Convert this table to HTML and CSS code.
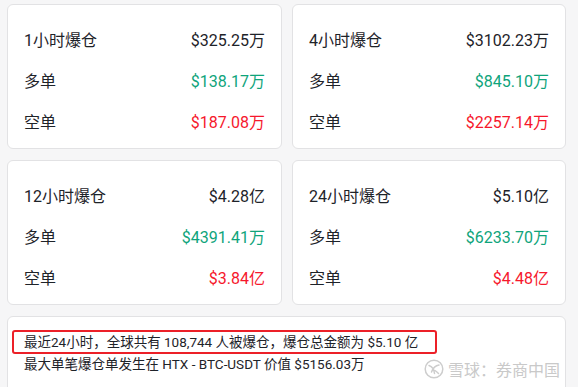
FILE: index.html
```html
<!DOCTYPE html>
<html lang="zh">
<head>
<meta charset="utf-8">
<link rel="stylesheet" href="styles.css">
</head>
<body>
<div class="page">
  <div class="grid">
    <div class="card">
      <div class="row"><span class="label">1小时爆仓</span><span class="val">$325.25万</span></div>
      <div class="row"><span class="label">多单</span><span class="val up">$138.17万</span></div>
      <div class="row"><span class="label">空单</span><span class="val down">$187.08万</span></div>
    </div>
    <div class="card">
      <div class="row"><span class="label">4小时爆仓</span><span class="val">$3102.23万</span></div>
      <div class="row"><span class="label">多单</span><span class="val up">$845.10万</span></div>
      <div class="row"><span class="label">空单</span><span class="val down">$2257.14万</span></div>
    </div>
    <div class="card">
      <div class="row"><span class="label">12小时爆仓</span><span class="val">$4.28亿</span></div>
      <div class="row"><span class="label">多单</span><span class="val up">$4391.41万</span></div>
      <div class="row"><span class="label">空单</span><span class="val down">$3.84亿</span></div>
    </div>
    <div class="card">
      <div class="row"><span class="label">24小时爆仓</span><span class="val">$5.10亿</span></div>
      <div class="row"><span class="label">多单</span><span class="val up">$6233.70万</span></div>
      <div class="row"><span class="label">空单</span><span class="val down">$4.48亿</span></div>
    </div>
  </div>
  <div class="summary">
    <div class="highlight">最近24小时，全球共有 108,744 人被爆仓，爆仓总金额为 $5.10 亿</div>
    <div class="line2">最大单笔爆仓单发生在 HTX - BTC-USDT 价值 $5156.03万</div>
  </div>
</div>
<div class="watermark">
  <svg class="wm-logo" width="20" height="20" viewBox="0 0 20 20">
    <circle cx="10" cy="10" r="8.8" fill="none" stroke="#cdcdcd" stroke-width="1.5"/>
    <path d="M5 6.5 C8 7.5 10 9.5 10.5 14.5 M15 6 C11.5 6.5 9 9 7.5 13 M11 11.5 C12.5 12.5 13.5 13.5 14.5 14.5" fill="none" stroke="#cdcdcd" stroke-width="1.5" stroke-linecap="round"/>
  </svg>
  <span>雪球：券商中国</span>
</div>
</body>
</html>
```
FILE: styles.css
```css
html, body {
  margin: 0;
  padding: 0;
  background: #f6f6f7;
  overflow: hidden;
}
body {
  font-family: "Roboto", "Noto Sans CJK SC", sans-serif;
  color: #1e2329;
  width: 578px;
  height: 387px;
  position: relative;
}
.page {
  padding: 4px 12px 0 7px;
}
.grid {
  display: grid;
  grid-template-columns: 275px 274px;
  column-gap: 10px;
  row-gap: 11px;
}
.card {
  background: #fff;
  border: 1px solid #e2e2e4;
  border-radius: 6px;
  padding: 13px 16px 7px 16px;
}
.row {
  height: 41px;
  display: flex;
  align-items: center;
  justify-content: space-between;
  font-size: 16px;
}
.label {
  color: #1e2329;
}
.val {
  color: #1e2329;
}
.up {
  color: #0fa47b;
}
.down {
  color: #f6182c;
}
.summary {
  margin-top: 11px;
  background: #fff;
  border: 1px solid #e2e2e4;
  border-radius: 6px;
  padding: 13px 0 30px 4px;
  font-size: 13.5px;
}
.highlight {
  display: inline-block;
  border: 2px solid #ec2028;
  border-radius: 3px;
  padding: 1px 17px 1px 10px;
  line-height: 18px;
}
.line2 {
  padding-left: 12px;
  line-height: 20px;
  margin-top: 0;
}
.watermark {
  position: absolute;
  left: 424px;
  top: 359px;
  display: flex;
  align-items: center;
  gap: 4px;
  color: #c9c9c9;
  font-size: 16px;
  font-family: "Noto Sans CJK SC", sans-serif;
  line-height: 20px;
}
```
